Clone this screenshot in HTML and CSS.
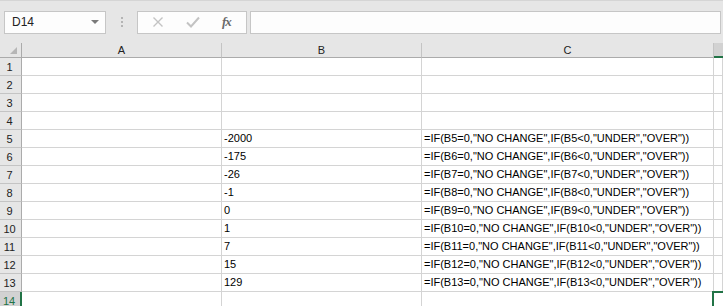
FILE: index.html
```html
<!DOCTYPE html>
<html>
<head>
<meta charset="utf-8">
<link rel="stylesheet" href="styles.css">
</head>
<body>
<div class="app">
  <div class="toolbar">
    <div class="namebox"><span class="name">D14</span><span class="caret"></span></div>
    <div class="dots"><i></i><i></i><i></i></div>
    <div class="btns">
      <svg class="ic" width="12" height="12" viewBox="0 0 12 12"><path d="M1.5 1.5 L10.5 10.5 M10.5 1.5 L1.5 10.5" stroke="#c3c3c3" stroke-width="1.4" fill="none"/></svg>
      <svg class="ic" width="14" height="12" viewBox="0 0 14 12"><path d="M1 6.5 L5 10.5 L13 1.5" stroke="#c3c3c3" stroke-width="2" fill="none"/></svg>
      <span class="fx">fx</span>
    </div>
    <div class="formula"></div>
  </div>
  <div class="grid">
    <div class="corner"><span class="tri"></span></div>
    <div class="ch">A</div><div class="ch">B</div><div class="ch">C</div><div class="ch sel"></div>

    <div class="rh">1</div><div class="c"></div><div class="c"></div><div class="c"></div><div class="c"></div>
    <div class="rh">2</div><div class="c"></div><div class="c"></div><div class="c"></div><div class="c"></div>
    <div class="rh">3</div><div class="c"></div><div class="c"></div><div class="c"></div><div class="c"></div>
    <div class="rh">4</div><div class="c"></div><div class="c"></div><div class="c"></div><div class="c"></div>
    <div class="rh">5</div><div class="c"></div><div class="c">-2000</div><div class="c">=IF(B5=0,"NO CHANGE",IF(B5&lt;0,"UNDER","OVER"))</div><div class="c"></div>
    <div class="rh">6</div><div class="c"></div><div class="c">-175</div><div class="c">=IF(B6=0,"NO CHANGE",IF(B6&lt;0,"UNDER","OVER"))</div><div class="c"></div>
    <div class="rh">7</div><div class="c"></div><div class="c">-26</div><div class="c">=IF(B7=0,"NO CHANGE",IF(B7&lt;0,"UNDER","OVER"))</div><div class="c"></div>
    <div class="rh">8</div><div class="c"></div><div class="c">-1</div><div class="c">=IF(B8=0,"NO CHANGE",IF(B8&lt;0,"UNDER","OVER"))</div><div class="c"></div>
    <div class="rh">9</div><div class="c"></div><div class="c">0</div><div class="c">=IF(B9=0,"NO CHANGE",IF(B9&lt;0,"UNDER","OVER"))</div><div class="c"></div>
    <div class="rh">10</div><div class="c"></div><div class="c">1</div><div class="c">=IF(B10=0,"NO CHANGE",IF(B10&lt;0,"UNDER","OVER"))</div><div class="c"></div>
    <div class="rh">11</div><div class="c"></div><div class="c">7</div><div class="c">=IF(B11=0,"NO CHANGE",IF(B11&lt;0,"UNDER","OVER"))</div><div class="c"></div>
    <div class="rh">12</div><div class="c"></div><div class="c">15</div><div class="c">=IF(B12=0,"NO CHANGE",IF(B12&lt;0,"UNDER","OVER"))</div><div class="c"></div>
    <div class="rh">13</div><div class="c"></div><div class="c">129</div><div class="c">=IF(B13=0,"NO CHANGE",IF(B13&lt;0,"UNDER","OVER"))</div><div class="c"></div>
    <div class="rh selrow">14</div><div class="c"></div><div class="c"></div><div class="c"></div><div class="c active"></div>
  </div>
</div>
</body>
</html>
```
FILE: styles.css
```css
html, body {
  margin: 0;
  padding: 0;
  background: #ffffff;
}
body {
  font-family: "Liberation Sans", Arial, sans-serif;
  font-size: 11px;
  color: #000;
  width: 723px;
  height: 306px;
  overflow: hidden;
}
.app {
  background: #e6e6e6;
}
.toolbar {
  display: flex;
  align-items: center;
  height: 43px;
  box-sizing: border-box;
  border-top: 1px solid #d5d5d5;
  padding: 10px 2px 10px 4px;
}
.namebox {
  width: 102px;
  height: 23px;
  box-sizing: border-box;
  border: 1px solid #c6c6c6;
  background: #fdfdfd;
  display: flex;
  align-items: center;
  justify-content: space-between;
  padding: 0 6px 0 7px;
}
.name {
  font-size: 12px;
  color: #222;
}
.caret {
  width: 0;
  height: 0;
  border-left: 4px solid transparent;
  border-right: 4px solid transparent;
  border-top: 4px solid #7a7a7a;
}
.dots {
  width: 31px;
  display: flex;
  flex-direction: column;
  align-items: center;
  gap: 2px;
}
.dots i {
  display: block;
  width: 2px;
  height: 2px;
  background: #b4b4b4;
}
.btns {
  width: 110px;
  height: 23px;
  box-sizing: border-box;
  border: 1px solid #c6c6c6;
  background: #fdfdfd;
  display: flex;
  align-items: center;
  padding-left: 14px;
  gap: 22px;
}
.fx {
  font-family: "Liberation Serif", serif;
  font-style: italic;
  font-weight: bold;
  font-size: 13px;
  color: #6a6a6a;
  letter-spacing: -1px;
}
.formula {
  flex: 1;
  margin-left: 3px;
  height: 23px;
  box-sizing: border-box;
  border: 1px solid #c6c6c6;
  background: #fdfdfd;
}
.grid {
  display: grid;
  grid-template-columns: 22px 200px 200px 292px 1fr;
  grid-template-rows: 15px repeat(14, 18px);
  background: #ffffff;
}
.grid > div {
  box-sizing: border-box;
}
.corner {
  background: #e6e6e6;
  border-bottom: 1px solid #ababab;
  border-right: 1px solid #ababab;
  position: relative;
}
.tri {
  position: absolute;
  right: 4px;
  bottom: 3px;
  width: 0;
  height: 0;
  border-left: 7px solid transparent;
  border-bottom: 7px solid #b6b6b6;
}
.ch {
  background: #e6e6e6;
  border-bottom: 1px solid #ababab;
  border-right: 1px solid #c4c4c4;
  text-align: center;
  line-height: 14px;
  color: #222;
}
.ch.sel {
  background: #d2d2d2;
  border-right: none;
  border-bottom: 2px solid #217346;
}
.rh {
  background: #e6e6e6;
  border-right: 1px solid #ababab;
  border-bottom: 1px solid #c4c4c4;
  text-align: center;
  line-height: 18px;
  color: #222;
  font-size: 11px;
  padding-right: 2px;
}
.rh.selrow {
  background: #d2d2d2;
  border-right: 2px solid #217346;
  color: #217346;
}
.c {
  border-right: 1px solid #d4d4d4;
  border-bottom: 1px solid #d4d4d4;
  line-height: 17px;
  padding-left: 2px;
  white-space: nowrap;
  overflow: visible;
}
.c.active {
  border: none;
  border-top: 2px solid #217346;
  border-left: 2px solid #217346;
  margin-top: -1px;
  margin-left: -2px;
}
```
